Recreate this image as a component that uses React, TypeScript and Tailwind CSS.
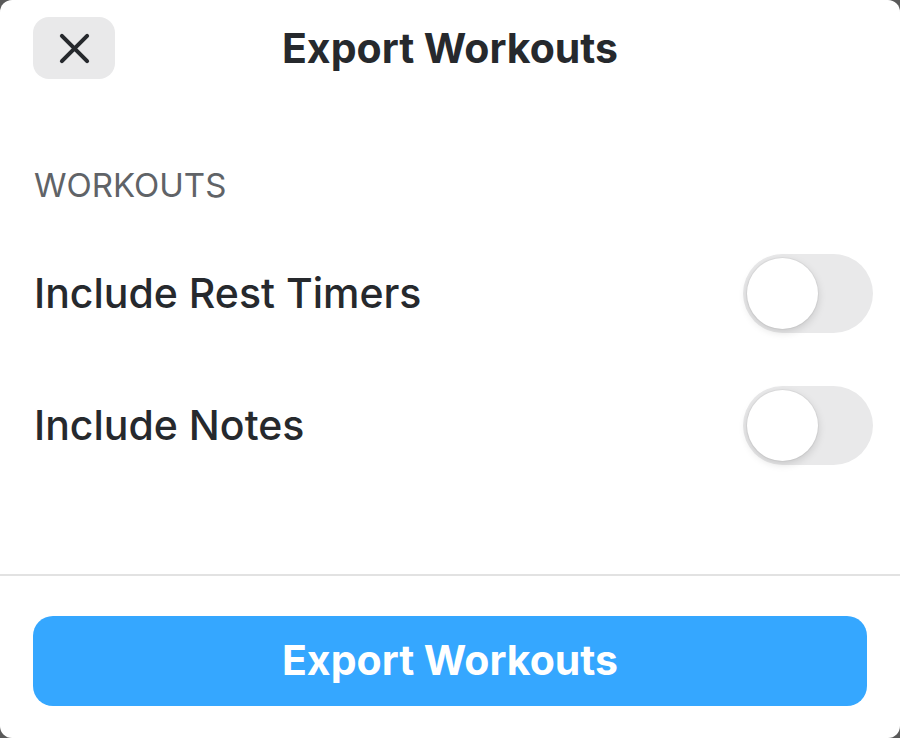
import React, { useState } from 'react';

const font = { fontFamily: 'Inter, "Noto Sans", sans-serif' };

function Toggle(props: { on: boolean; onChange: (v: boolean) => void }) {
  return (
    <button
      type="button"
      onClick={() => props.onChange(!props.on)}
      className={`relative flex h-[79px] w-[130px] shrink-0 items-center rounded-full p-[4px] transition-colors ${
        props.on ? 'justify-end bg-[#35a7ff]' : 'justify-start bg-[#e9e9ea]'
      }`}
    >
      <span className="block h-[71px] w-[71px] rounded-full bg-white shadow-[0_3px_8px_rgba(0,0,0,0.15),0_0_0_1px_rgba(0,0,0,0.04)]" />
    </button>
  );
}

function OptionRow(props: { label: string; on: boolean; onChange: (v: boolean) => void }) {
  return (
    <div className="flex h-[132px] items-center justify-between pl-[34px] pr-[27px]">
      <span className="text-[41px] leading-[48px] font-medium text-[#26292d]">{props.label}</span>
      <Toggle on={props.on} onChange={props.onChange} />
    </div>
  );
}

export default function App() {
  const [restTimers, setRestTimers] = useState(false);
  const [notes, setNotes] = useState(false);

  return (
    <div className="h-[738px] w-[900px] bg-[#5a5a5a]" style={font}>
      <div className="flex h-full flex-col rounded-[12px] bg-white">
        {/* header */}
        <div className="grid grid-cols-[1fr_auto_1fr] items-center px-[33px] pt-[17px]">
          <button
            type="button"
            className="flex h-[62px] w-[82px] items-center justify-center rounded-[16px] bg-[#e9e9ea]"
          >
            <svg width="31" height="31" viewBox="0 0 32 32" fill="none" stroke="#26292d" strokeWidth="4.2" strokeLinecap="round">
              <path d="M3 3 L29 29 M29 3 L3 29" />
            </svg>
          </button>
          <h1 className="text-[41px] leading-[48px] font-bold text-[#26292d]">Export Workouts</h1>
          <div />
        </div>

        <div className="mt-[86px] mb-[22px] pl-[34px] text-[33px] leading-[40px] text-[#606367]">WORKOUTS</div>

        <OptionRow label="Include Rest Timers" on={restTimers} onChange={setRestTimers} />
        <OptionRow label="Include Notes" on={notes} onChange={setNotes} />

        <div className="flex-1" />

        <div className="border-t-2 border-[#e2e2e2] px-[33px] pt-[40px] pb-[32px]">
          <button
            type="button"
            className="flex h-[90px] w-full items-center justify-center rounded-[20px] bg-[#35a7ff] text-[41px] font-bold text-white"
          >
            Export Workouts
          </button>
        </div>
      </div>
    </div>
  );
}
